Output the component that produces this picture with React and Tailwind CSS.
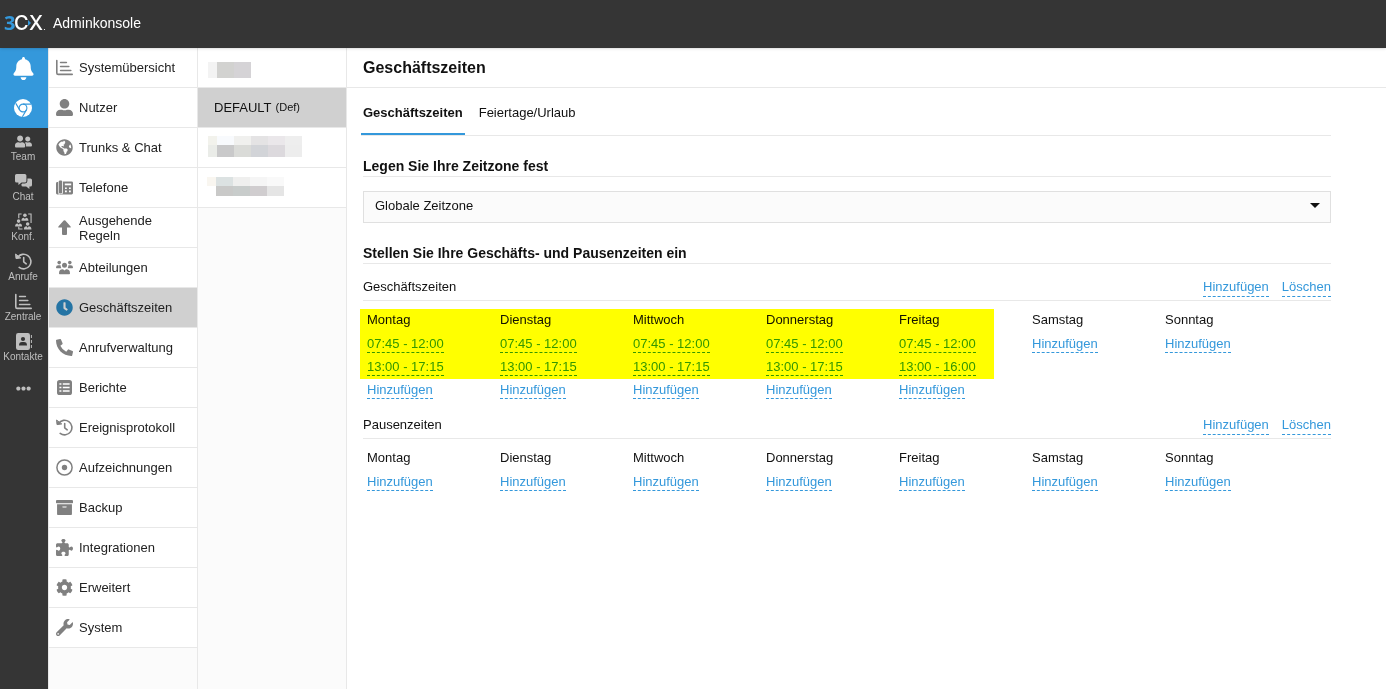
import React, { useState } from 'react';
import {
  FaBell,
  FaUserFriends,
  FaUserAlt,
  FaGlobeAmericas,
  FaClock,
  FaPhoneAlt,
  FaArchive,
  FaCog,
  FaWrench,
  FaEllipsisH,
} from 'react-icons/fa';
import { FaPuzzlePiece } from 'react-icons/fa6';

/* Icons that the icon set lacks in this weight */
const ChartIcon = ({ className }) => (
  <svg viewBox="0 0 17 17" className={className} fill="none" stroke="currentColor" strokeWidth="1.6" strokeLinecap="round">
    <path d="M.8 1.5V14Q.8 15.4 2.2 15.4H16.2" />
    <path d="M4.6 3.5H10.4M4.6 7.5H12.8M4.6 11.5H14.8" />
  </svg>
);

const ChromeIcon = ({ className }) => (
  <svg viewBox="0 0 18 18" className={className}>
    <circle cx="9" cy="9" r="9" fill="currentColor" />
    <g fill="none" stroke="#3498db" strokeWidth="1.1">
      <circle cx="9" cy="9" r="3.9" />
      <path d="M9 5.1H17M5.6 10.9L1.8 4.4M12.4 10.9L8.4 17.8" />
    </g>
  </svg>
);

const ChatIcon = ({ className }) => (
  <svg viewBox="0 0 17 17" className={className} fill="currentColor">
    <path d="M1.6 1H9.8Q11.4 1 11.4 2.6V8Q11.4 9.6 9.8 9.6H6.6L3.4 12V9.6H1.6Q0 9.6 0 8V2.6Q0 1 1.6 1Z" />
    <path d="M12.4 5.4H15.4Q17 5.4 17 7V12Q17 13.6 15.4 13.6H14.4V16L11.2 13.6H8Q6.4 13.6 6.4 12V11.2L7.2 10.6H10Q12.4 10.4 12.4 8Z" />
  </svg>
);

const DeskPhoneIcon = ({ className }) => (
  <svg viewBox="0 0 17 17" className={className}>
    <path d="M1.4 3H2.2V14.4H2.8V15.4H1.4Q0 15.4 0 14V4.4Q0 3 1.4 3Z" fill="currentColor" />
    <rect x="2.8" y="1.4" width="3.4" height="13" rx="1.2" fill="currentColor" />
    <path d="M7 2.4H15.6Q17 2.4 17 3.8V14Q17 15.4 15.6 15.4H3.4V14.9H6Q7 14.9 7 13.6Z" fill="currentColor" />
    <path d="M8.8 5.4H15.2" stroke="#fff" strokeWidth="1.8" />
    <path d="M9 9.2H10.8M13 9.2H14.8M9 12.4H10.8M13 12.4H14.8" stroke="#fff" strokeWidth="1.6" />
  </svg>
);

const HistoryIcon = ({ className }) => (
  <svg viewBox="0 0 17 17" className={className} fill="none" stroke="currentColor" strokeWidth="1.6" strokeLinecap="round" strokeLinejoin="round">
    <path d="M2.6 4.4A7.3 7.3 0 1 1 4.2 14.4" />
    <path d="M8.7 4.6V8.8L11.2 10.8" />
    <path d="M.6 1.4L1 5.6L5.4 5Z" fill="currentColor" strokeWidth="1" />
  </svg>
);

const ArrowIcon = ({ className }) => (
  <svg viewBox="0 0 17 17" className={className} fill="currentColor">
    <path d="M8.5 1.2Q8.9 1.2 9.3 1.6L14.6 7.4Q15.2 8.6 14 8.6H11V15Q11 16 10 16H7Q6 16 6 15V8.6H3Q1.8 8.6 2.4 7.4L7.7 1.6Q8.1 1.2 8.5 1.2Z" />
  </svg>
);

const ConferenceIcon = ({ className }) => (
  <svg viewBox="0 0 18 18" className={className} fill="currentColor">
    <path d="M4 5.5V1H7M14 1H17V10.5M4 14.5V17H8" fill="none" stroke="currentColor" strokeWidth="1.2" />
    <circle cx="10.5" cy="2.4" r="1.9" />
    <path d="M6.8 8.2Q6.8 4.9 9.4 4.9L10.5 6.4L11.6 4.9Q14.2 4.9 14.2 8.2Z" />
    <circle cx="3.8" cy="8.6" r="1.9" />
    <path d="M.1 14.2Q.1 11 2.7 11L3.8 12.5L4.9 11Q7.5 11 7.5 14.2Z" />
    <circle cx="13.4" cy="11.6" r="1.9" />
    <path d="M9.4 17.6Q9.4 14.1 12.3 14.1L13.4 15.6L14.5 14.1Q17.4 14.1 17.4 17.6Z" />
  </svg>
);

const GroupIcon = ({ className }) => (
  <svg viewBox="0 0 17 17" className={className} fill="currentColor">
    <circle cx="3.2" cy="3.6" r="1.8" />
    <circle cx="13.8" cy="3.6" r="1.8" />
    <circle cx="8.5" cy="6.2" r="2.5" />
    <path d="M0 8.6Q0 6.3 2.2 6.3H4.6Q4.6 7.8 5.4 9.2H.6Q0 9.2 0 8.6Z" />
    <path d="M17 8.6Q17 6.3 14.8 6.3H12.4Q12.4 7.8 11.6 9.2H16.4Q17 9.2 17 8.6Z" />
    <path d="M3 14.4Q3 10.2 6.6 10.2H7L8.5 11.6L10 10.2H10.4Q14 10.2 14 14.4Q14 15.2 13.2 15.2H3.8Q3 15.2 3 14.4Z" />
  </svg>
);

const ContactsIcon = ({ className }) => (
  <svg viewBox="0 0 17 17" className={className}>
    <rect x="1" y="0" width="14" height="17" rx="2.2" fill="currentColor" />
    <path d="M16.4 2V5M16.4 7V10M16.4 12V15" stroke="currentColor" strokeWidth="1" />
    <circle cx="8" cy="6" r="2.1" fill="#353535" />
    <path d="M4 12.4Q4 9 7 9H9Q12 9 12 12.4Z" fill="#353535" />
  </svg>
);

const ListIcon = ({ className }) => (
  <svg viewBox="0 0 17 17" className={className}>
    <rect x="1" y="1" width="15" height="15" rx="2.6" fill="currentColor" />
    <path d="M3.4 5H5.4M3.4 8.5H5.4M3.4 12H5.4M6.8 5H13.6M6.8 8.5H13.6M6.8 12H13.6" stroke="#fff" strokeWidth="1.6" />
  </svg>
);

const RecordIcon = ({ className }) => (
  <svg viewBox="0 0 17 17" className={className}>
    <circle cx="8.5" cy="8.5" r="7.6" fill="none" stroke="currentColor" strokeWidth="1.5" />
    <circle cx="8.5" cy="8.5" r="2.7" fill="currentColor" />
  </svg>
);

const Logo = () => (
  <svg viewBox="0 0 42 40" className="h-10 w-[42px]" role="img" aria-label="3CX">
    <text x="0" y="26" fontFamily="'Open Sans', sans-serif" fontSize="20" fontWeight="700" fill="#3498db">3</text>
    <g fontFamily="Inter, sans-serif" fontSize="20" fontWeight="500" fill="#fff">
      <text x="10" y="26">C</text>
      <text x="25" y="26">X</text>
    </g>
    <path d="M24 16L27 19L24 22Z" fill="#3498db" />
    <circle cx="40.5" cy="25.5" r=".6" fill="#fff" />
  </svg>
);

const RAIL_ITEMS = [
  { label: 'Team', icon: FaUserFriends },
  { label: 'Chat', icon: ChatIcon },
  { label: 'Konf.', icon: ConferenceIcon },
  { label: 'Anrufe', icon: HistoryIcon },
  { label: 'Zentrale', icon: ChartIcon },
  { label: 'Kontakte', icon: ContactsIcon },
];

const MENU_ITEMS = [
  { label: 'Systemübersicht', icon: ChartIcon },
  { label: 'Nutzer', icon: FaUserAlt },
  { label: 'Trunks & Chat', icon: FaGlobeAmericas },
  { label: 'Telefone', icon: DeskPhoneIcon },
  { label: 'Ausgehende Regeln', icon: ArrowIcon },
  { label: 'Abteilungen', icon: GroupIcon },
  { label: 'Geschäftszeiten', icon: FaClock, active: true },
  { label: 'Anrufverwaltung', icon: FaPhoneAlt },
  { label: 'Berichte', icon: ListIcon },
  { label: 'Ereignisprotokoll', icon: HistoryIcon },
  { label: 'Aufzeichnungen', icon: RecordIcon },
  { label: 'Backup', icon: FaArchive },
  { label: 'Integrationen', icon: FaPuzzlePiece },
  { label: 'Erweitert', icon: FaCog },
  { label: 'System', icon: FaWrench },
];

const OFFICE_HOURS = [
  { day: 'Montag', times: ['07:45 - 12:00', '13:00 - 17:15'] },
  { day: 'Dienstag', times: ['07:45 - 12:00', '13:00 - 17:15'] },
  { day: 'Mittwoch', times: ['07:45 - 12:00', '13:00 - 17:15'] },
  { day: 'Donnerstag', times: ['07:45 - 12:00', '13:00 - 17:15'] },
  { day: 'Freitag', times: ['07:45 - 12:00', '13:00 - 16:00'] },
  { day: 'Samstag', times: [] },
  { day: 'Sonntag', times: [] },
];

const BREAK_HOURS = OFFICE_HOURS.map(({ day }) => ({ day, times: [] }));

function DashedButton({ children, className = 'pb-px' }) {
  return (
    <button type="button" className={`${className} border-b border-dashed border-[#3498db] text-[#3498db] cursor-pointer whitespace-nowrap`}>
      {children}
    </button>
  );
}

// Pixelated placeholder for a hidden department name
function Mosaic({ rows }) {
  return (
    <div aria-hidden="true">
      {rows.map((row, idx) => (
        <div key={idx} className={`flex ${row.height}`}>
          {row.cells.map((color, i) => (
            <span key={i} className={i === 0 ? 'w-[9px]' : 'w-[17px]'} style={{ backgroundColor: color }} />
          ))}
        </div>
      ))}
    </div>
  );
}

function Schedule({ title, days, highlight }) {
  return (
    <section>
      <div className="flex items-start justify-between border-b border-[#e8e8e8] pt-[15px] pb-[3px]">
        <h3>{title}</h3>
        <div className="flex gap-[13px]">
          <DashedButton className="pb-0.5">Hinzufügen</DashedButton>
          <DashedButton className="pb-0.5">Löschen</DashedButton>
        </div>
      </div>
      <div className="relative grid grid-cols-7 pt-[11px] pr-[33px] pb-[3px] pl-1">
        {days.map(({ day, times }) => (
          <div key={day} className="flex flex-col items-start gap-1.5">
            <h4 className="mb-[3px]">{day}</h4>
            {times.map((time) => (
              <DashedButton key={time}>{time}</DashedButton>
            ))}
            <DashedButton>Hinzufügen</DashedButton>
          </div>
        ))}
        {highlight && (
          <div className="pointer-events-none absolute top-2 -left-[3px] h-[70px] w-[65.5%] bg-[#ffff00] mix-blend-multiply" />
        )}
      </div>
    </section>
  );
}

export default function App() {
  const [zone, setZone] = useState('global');

  return (
    <div className="flex min-h-screen flex-col bg-white font-['Liberation_Sans',Arial,sans-serif] text-[13px] leading-[15px] text-[#111]">
      <header className="z-10 flex h-12 items-center gap-[7px] bg-[#353535] pl-1 shadow-sm">
        <Logo />
        <span className="pb-0.5 text-sm leading-4 text-white">Adminkonsole</span>
      </header>

      <div className="flex flex-1">
        {/* App rail */}
        <nav aria-label="Apps" className="flex w-12 shrink-0 flex-col bg-[#353535]">
          <button type="button" aria-label="Benachrichtigungen" className="flex h-10 items-center justify-center bg-[#3498db] pr-px text-white">
            <FaBell className="size-[23px]" />
          </button>
          <button type="button" aria-label="Chrome" className="flex h-10 items-center justify-center bg-[#3498db] pr-0.5 text-white">
            <ChromeIcon className="size-[18px]" />
          </button>
          {RAIL_ITEMS.map(({ label, icon: Icon }) => (
            <a key={label} href="#" className="flex h-10 flex-col items-center justify-center gap-px pr-0.5 text-[10px] leading-3 text-[#bfbfbf]">
              <Icon className="size-[17px]" />
              {label}
            </a>
          ))}
          <button type="button" aria-label="Mehr" className="flex h-10 items-center justify-center pr-px text-[#bfbfbf]">
            <FaEllipsisH className="size-[15px]" />
          </button>
        </nav>

        {/* Main menu */}
        <nav aria-label="Menü" className="w-[150px] shrink-0 border-x border-[#e8e8e8] bg-[#fbfbfb]">
          {MENU_ITEMS.map(({ label, icon: Icon, active }) => (
            <a
              key={label}
              href="#"
              className={`flex h-10 items-center gap-1.5 border-b border-[#e8e8e8] pr-5 pl-[7px] text-[#222] ${active ? 'bg-[#d0d0d0]' : 'bg-white'}`}
            >
              <Icon className={`size-[17px] shrink-0 ${active ? 'text-[#2574a4]' : 'text-[#808080]'}`} />
              <span>{label}</span>
            </a>
          ))}
        </nav>

        {/* Departments */}
        <ul className="w-[149px] shrink-0 border-r border-[#e8e8e8] bg-[#fbfbfb]">
          <li className="flex h-10 items-center border-b border-[#e8e8e8] bg-white pt-1 pl-2.5">
            <Mosaic rows={[{ height: 'h-4', cells: ['#f3f3f3', '#d2d2d0', '#d5d3d6'] }]} />
          </li>
          <li className="h-10 border-b border-[#e8e8e8] bg-[#d0d0d0]">
            <a href="#" className="flex h-full items-center gap-1 pl-4">
              DEFAULT <small className="text-[11px]">(Def)</small>
            </a>
          </li>
          <li className="flex h-10 items-center border-b border-[#e8e8e8] bg-white pb-0.5 pl-2.5">
            <Mosaic
              rows={[
                { height: 'h-[9px]', cells: ['#f2f2ec', '#f8fafd', '#f0f0ee', '#e4e3e4', '#eae7ea', '#eeeeee'] },
                { height: 'h-3', cells: ['#eaece8', '#c9c9ca', '#dadbd8', '#d2d4d8', '#dcd9dd', '#ededed'] },
              ]}
            />
          </li>
          <li className="flex h-10 items-center border-b border-[#e8e8e8] bg-white pb-0.5 pl-[9px]">
            <Mosaic
              rows={[
                { height: 'h-[9px]', cells: ['#f9f6f0', '#dce2e2', '#efefee', '#f5f5f5', '#f9f9f9'] },
                { height: 'h-2.5', cells: ['#ffffff', '#c9c9c8', '#c8cccb', '#d0cdcf', '#e5e5e5'] },
              ]}
            />
          </li>
        </ul>

        <main className="min-w-0 flex-1">
          <div className="flex h-10 items-center border-b border-[#e8e8e8] pl-4">
            <h1 className="text-base leading-5 font-bold">Geschäftszeiten</h1>
          </div>

          <div className="pr-[55px] pl-4">
            <div role="tablist" className="-ml-0.5 flex gap-3 border-b border-[#e8e8e8] pt-[17px]">
              <button type="button" role="tab" aria-selected="true" className="border-b-2 border-[#3498db] px-0.5 pb-[13px] font-bold">
                Geschäftszeiten
              </button>
              <button type="button" role="tab" aria-selected="false" className="border-b-2 border-transparent px-0.5 pb-[13px]">
                Feiertage/Urlaub
              </button>
            </div>

            <h2 className="border-b border-[#e8e8e8] pt-[22px] pb-0.5 text-sm leading-4 font-bold">
              <label htmlFor="timezone">Legen Sie Ihre Zeitzone fest</label>
            </h2>
            <div className="relative mt-3.5">
              <select
                id="timezone"
                value={zone}
                onChange={(e) => setZone(e.target.value)}
                className="h-8 w-full appearance-none border border-[#e0e0e0] bg-[#fbfbfb] pb-1 pl-[11px]"
              >
                <option value="global">Globale Zeitzone</option>
              </select>
              <svg viewBox="0 0 10 5" className="pointer-events-none absolute top-3 right-[11px] h-[5px] w-2.5">
                <path d="M0 0H10L5 5Z" fill="#111" />
              </svg>
            </div>

            <h2 className="border-b border-[#e8e8e8] pt-[22px] pb-0.5 text-sm leading-4 font-bold">
              Stellen Sie Ihre Geschäfts- und Pausenzeiten ein
            </h2>
            <Schedule title="Geschäftszeiten" days={OFFICE_HOURS} highlight />
            <Schedule title="Pausenzeiten" days={BREAK_HOURS} />
          </div>
        </main>
      </div>
    </div>
  );
}
